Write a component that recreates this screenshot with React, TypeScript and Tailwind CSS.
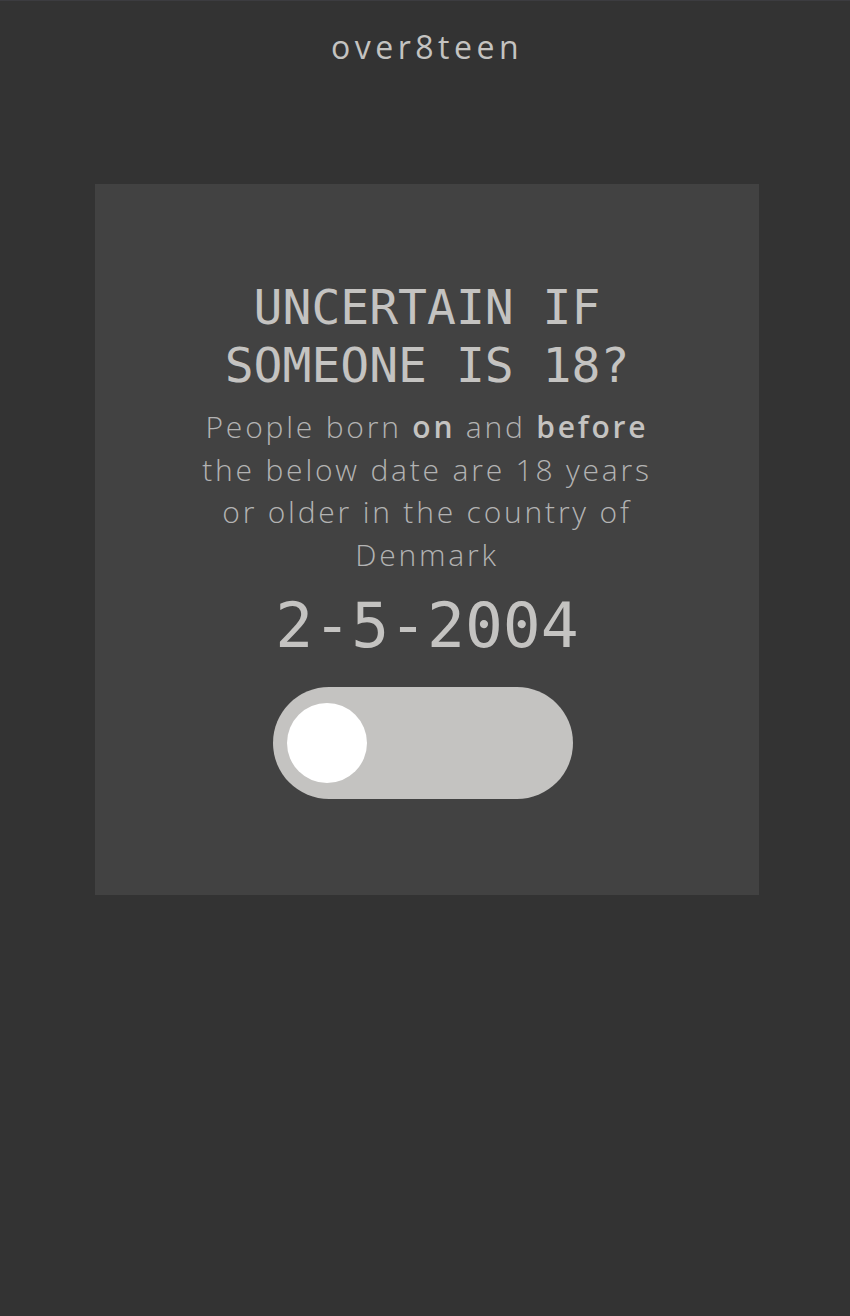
export default function App() {
  return (
    <div className="min-h-[1316px] bg-[#333333] border-t border-[#3c3c40] flex flex-col items-center pl-[4px]">
      {/* Header */}
      <header className="h-[91px] flex items-center justify-center">
        <h1 className="text-[32px] tracking-[4.5px] text-[#c4c3c1] font-['Open_Sans',sans-serif]">
          over8teen
        </h1>
      </header>

      {/* Card */}
      <main className="mt-[92px] w-[664px] h-[711px] bg-[#424242] flex flex-col items-center pt-[94px]">
        <h2 className="text-[48px] leading-[58px] text-center text-[#c4c3c1] font-['DejaVu_Sans_Mono',monospace]">
          UNCERTAIN IF
          <br />
          SOMEONE IS 18?
        </h2>
        <p className="mt-[12px] w-[480px] text-[30px] leading-[42.5px] text-center text-[#b3b3b3] font-['Open_Sans',sans-serif] font-light tracking-[2.8px]">
          People born <b className="font-semibold text-[#c4c3c1]">on</b> and{" "}
          <b className="font-semibold text-[#c4c3c1]">before</b> the below date are 18 years or older in
          the country of Denmark
        </p>
        <div className="mt-[12px] text-[63px] leading-[76px] text-[#c4c3c1] font-['DejaVu_Sans_Mono',monospace]">
          2-5-2004
        </div>
        <button className="mt-[23px] mr-[8px] w-[300px] h-[112px] rounded-full bg-[#c4c3c1] flex items-center px-[14px]">
          <span className="block w-[80px] h-[80px] rounded-full bg-white" />
        </button>
      </main>
    </div>
  );
}
